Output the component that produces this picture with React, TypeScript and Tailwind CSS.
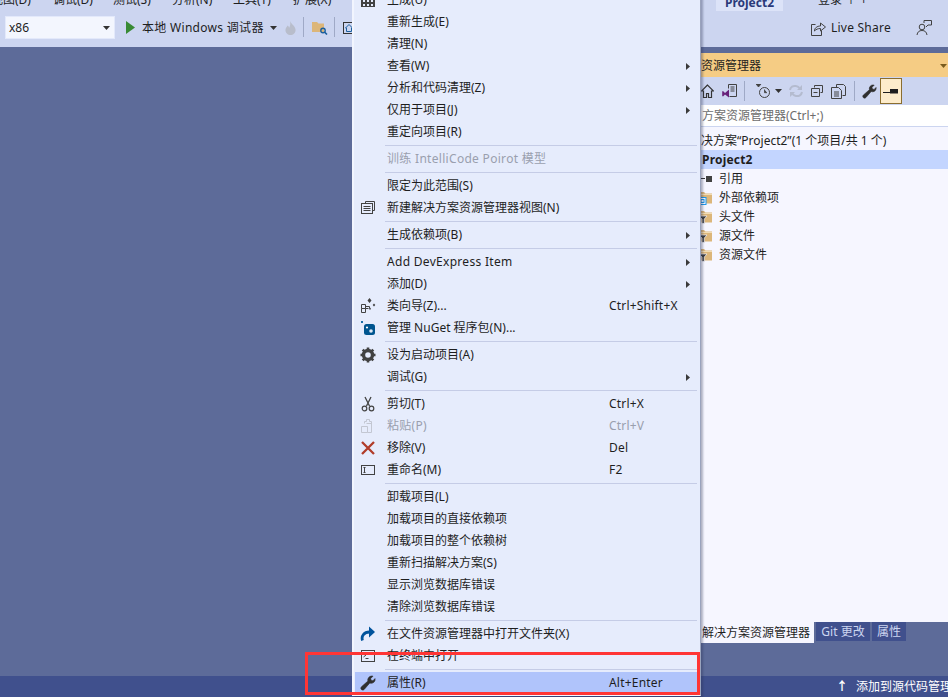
import type { ReactNode } from 'react'

const font = "font-['Noto_Sans','Noto_Sans_CJK_SC',sans-serif]"

function Caret({ className = '' }: { className?: string }) {
  return (
    <svg width="7" height="4" viewBox="0 0 7 4" className={className}>
      <path d="M0 0h7L3.5 4z" fill="currentColor" />
    </svg>
  )
}

function Wrench({ size = 16, color = '#2f2f2f' }: { size?: number; color?: string }) {
  return (
    <svg width={size} height={size} viewBox="0 0 16 16">
      <path
        d="M15 3.6c.6 2.4-1.300 4.800-3.800 4.700-.5 0-1-.1-1.400-.3L4.200 14.400c-.8.9-2.100.9-2.800.1-.8-.8-.7-2 .1-2.800L7.900 6.100C7.200 3.700 9 1 11.700 1c.5 0 1 .1 1.300.2L10.700 3.500l.4 1.800 1.800.5z"
        fill={color}
        stroke={color}
        strokeWidth="0.6"
      />
    </svg>
  )
}

function FolderIcon({ filter }: { filter?: boolean }) {
  return (
    <svg width="16" height="14" viewBox="0 0 16 14">
      <path d="M1 1h5l1.500 1.500H14v10H1z" fill="#dcb67a" />
      <path d="M1 3.500h13" stroke="#f1dcb4" />
      {filter ? (
        <path d="M1 6h8L6.300 9v4.500H4V9z" fill="#3b3b3b" stroke="#f6f6ff" strokeWidth="0.7" />
      ) : (
        <g>
          <rect x="1" y="6.500" width="7" height="7" fill="#f6f6ff" stroke="#1c97ea" />
          <rect x="3" y="8.500" width="3" height="3" fill="none" stroke="#1c97ea" />
        </g>
      )}
    </svg>
  )
}

const line = { fill: 'none', stroke: '#424242', strokeWidth: 1 }

const menuIcons: Record<string, ReactNode> = {
  build: (
    <svg width="16" height="16" viewBox="0 0 16 16">
      <rect x="1" y="1" width="14" height="14" fill="#424242" />
      <path d="M3 8h2v2H3zM7 8h2v2H7zM11 8h2v2h-2zM3 12h2v2H3zM7 12h2v2H7zM11 12h2v2h-2z" fill="#e6ecfc" />
    </svg>
  ),
  view: (
    <svg width="16" height="16" viewBox="0 0 16 16">
      <path d="M5.500 3.500V1.500h9v9h-2" {...line} />
      <rect x="1.500" y="3.500" width="11" height="10" {...line} />
      <path d="M3.500 6.500h7M3.500 8.500h7M3.500 10.500h7" {...line} />
    </svg>
  ),
  wizard: (
    <svg width="16" height="16" viewBox="0 0 16 16">
      <path d="M1.500 6.500h4v4h-4zM5.500 8.500h4v2M1.500 10.500v4h4v-4M5.500 10.500h3" {...line} />
      <path d="M9.500 0l2 2.500-2 2.500-2-2.500zM14 5.500l1.300 1.500-1.300 1.500-1.300-1.500zM10 9.500l1 1.200-1 1.200-1-1.200z" fill="#424242" />
    </svg>
  ),
  nuget: (
    <svg width="16" height="16" viewBox="0 0 16 16">
      <path d="M1 1h2v2H1z" fill="#1b6ea8" />
      <rect x="4" y="4" width="11" height="11" rx="2.500" fill="#00558f" />
      <circle cx="7" cy="7.500" r="1.100" fill="#fff" />
      <circle cx="11" cy="11" r="1.800" fill="#dfe9f5" />
    </svg>
  ),
  gear: (
    <svg width="16" height="16" viewBox="0 0 16 16">
      <circle cx="8" cy="8" r="4.500" fill="none" stroke="#424242" strokeWidth="3.400" />
      <path d="M8 .5v3M8 12.500v3M.5 8h3M12.500 8h3M2.700 2.700l2 2M11.300 11.300l2 2M13.300 2.700l-2 2M4.700 11.300l-2 2" stroke="#424242" strokeWidth="2.600" />
    </svg>
  ),
  cut: (
    <svg width="16" height="16" viewBox="0 0 16 16">
      <path d="M5 1l4.500 9M11 1L6.500 10" {...line} strokeWidth={1.300} />
      <circle cx="4.500" cy="12.500" r="2.300" {...line} strokeWidth={1.200} />
      <circle cx="11.500" cy="12.500" r="2.300" {...line} strokeWidth={1.200} />
    </svg>
  ),
  paste: (
    <svg width="16" height="16" viewBox="0 0 16 16">
      <g fill="none" stroke="#c3c7d2">
        <path d="M4.500 5.500V3.500h2v-2h3v2h2v11h-4" />
        <path d="M1.500 8.500h6v6h-6z" />
        <path d="M11.500 5.500h-5" />
      </g>
    </svg>
  ),
  remove: (
    <svg width="16" height="16" viewBox="0 0 16 16">
      <path d="M2 2l12 12M14 2L2 14" stroke="#b13c2a" strokeWidth="2.300" />
    </svg>
  ),
  rename: (
    <svg width="16" height="16" viewBox="0 0 16 16">
      <rect x="1.500" y="3.500" width="13" height="9" {...line} />
      <path d="M3.500 5.500h2M3.500 10.500h2M4.500 5.500v5" {...line} />
    </svg>
  ),
  open: (
    <svg width="16" height="16" viewBox="0 0 16 16">
      <path d="M2.500 14.500C1 10 4 6 9.500 6" fill="none" stroke="#00539c" strokeWidth="2.800" />
      <path d="M9 .5L15 6l-6 5.500z" fill="#00539c" />
    </svg>
  ),
  terminal: (
    <svg width="16" height="16" viewBox="0 0 16 16">
      <rect x="1.500" y="2.500" width="13" height="11" {...line} />
      <path d="M3.500 5l2.500 2-2.500 2M5.500 10.500h3" {...line} />
    </svg>
  ),
  wrench: <Wrench />,
}

type Row =
  | 'sep'
  | { label: string; icon?: string; key?: string; arrow?: boolean; off?: boolean; hot?: boolean }

const rows: Row[] = [
  { label: '生成(U)', icon: 'build' },
  { label: '重新生成(E)' },
  { label: '清理(N)' },
  { label: '查看(W)', arrow: true },
  { label: '分析和代码清理(Z)', arrow: true },
  { label: '仅用于项目(J)', arrow: true },
  { label: '重定向项目(R)' },
  'sep',
  { label: '训练 IntelliCode Poirot 模型', off: true },
  'sep',
  { label: '限定为此范围(S)' },
  { label: '新建解决方案资源管理器视图(N)', icon: 'view' },
  'sep',
  { label: '生成依赖项(B)', arrow: true },
  'sep',
  { label: 'Add DevExpress Item', arrow: true },
  { label: '添加(D)', arrow: true },
  { label: '类向导(Z)...', icon: 'wizard', key: 'Ctrl+Shift+X' },
  { label: '管理 NuGet 程序包(N)...', icon: 'nuget' },
  'sep',
  { label: '设为启动项目(A)', icon: 'gear' },
  { label: '调试(G)', arrow: true },
  'sep',
  { label: '剪切(T)', icon: 'cut', key: 'Ctrl+X' },
  { label: '粘贴(P)', icon: 'paste', key: 'Ctrl+V', off: true },
  { label: '移除(V)', icon: 'remove', key: 'Del' },
  { label: '重命名(M)', icon: 'rename', key: 'F2' },
  'sep',
  { label: '卸载项目(L)' },
  { label: '加载项目的直接依赖项' },
  { label: '加载项目的整个依赖树' },
  { label: '重新扫描解决方案(S)' },
  { label: '显示浏览数据库错误' },
  { label: '清除浏览数据库错误' },
  'sep',
  { label: '在文件资源管理器中打开文件夹(X)', icon: 'open' },
  { label: '在终端中打开', icon: 'terminal' },
  'sep',
  { label: '属性(R)', icon: 'wrench', key: 'Alt+Enter', hot: true },
]

function ContextMenu() {
  return (
    <div className="absolute left-[352px] top-[-11px] w-[349px] border-l-2 border-r border-b border-[#f2f5fe] border-r-[#9aa3bd] bg-[#e6ecfc] pb-[1px] pl-[1px] pr-[3px] shadow-[2px_2px_2px_rgba(40,50,80,0.35)]">
      {rows.map((r, i) =>
        r === 'sep' ? (
          <div key={i} className="flex h-[5px] items-center pl-[30px]">
            <div className="h-px w-full bg-[#c5cce6]" />
          </div>
        ) : (
          <div
            key={i}
            className={`flex h-[22px] items-center text-[12px] ${r.hot ? 'bg-[#b0c4fb]' : ''} ${r.off ? 'text-[#9a9fae]' : 'text-[#1e1e1e]'}`}
          >
            <div className="flex w-[32px] shrink-0 justify-center pr-[7px]">{r.icon ? menuIcons[r.icon] : null}</div>
            <div className={`w-[222px] whitespace-nowrap ${r.label.startsWith('Add') || r.off ? 'tracking-[0.3px]' : ''}`}>{r.label}</div>
            <div className="flex-1 whitespace-nowrap tracking-[0.2px]">{r.key}</div>
            {r.arrow ? (
              <svg width="4" height="7" viewBox="0 0 4 7" className="mr-[7px]">
                <path d="M0 0l4 3.500L0 7z" fill="#3a3a3a" />
              </svg>
            ) : null}
          </div>
        ),
      )}
    </div>
  )
}

function TopBar() {
  return (
    <div className="h-[47px] shrink-0 bg-[#ccd5f0] text-[#1e1e1e]">
      <div className="flex h-[11px] items-end overflow-hidden pb-[3px] text-[12px] leading-[16px]">
        <span className="ml-[-9px] w-[62px] whitespace-nowrap">视图(D)</span>
        <span className="w-[60px] whitespace-nowrap">调试(D)</span>
        <span className="w-[59px] whitespace-nowrap">测试(S)</span>
        <span className="w-[61px] whitespace-nowrap">分析(N)</span>
        <span className="w-[60px] whitespace-nowrap">工具(T)</span>
        <span className="w-[60px] whitespace-nowrap">扩展(X)</span>
        <div className="ml-[363px] flex h-[11px] w-[67px] items-end justify-center self-start bg-[#dce3f8] font-bold text-[#2a3a7a]">
          Project2
        </div>
        <span className="ml-[35px] whitespace-nowrap">登录 ↑ +</span>
      </div>
      <div className="flex h-[36px] items-start pt-[5px]">
        <div className="ml-[5px] flex h-[23px] w-[110px] items-center justify-between border border-[#e3e9fb] bg-[#f3f6fe] pl-[3px] pr-[4px] text-[12px]">
          x86
          <Caret className="text-[#333]" />
        </div>
        <svg width="9" height="13" viewBox="0 0 9 13" className="ml-[11px] mt-[5px]">
          <path d="M0 0l9 6.500L0 13z" fill="#388a34" />
        </svg>
        <div className="ml-[7px] mt-[3px] whitespace-nowrap text-[12px] leading-[18px] tracking-[0.3px]">本地 Windows 调试器</div>
        <Caret className="ml-[6px] mt-[10px] text-[#333]" />
        <svg width="11" height="14" viewBox="0 0 11 14" className="ml-[8px] mt-[5px]">
          <path d="M5 0c1 3 5 4.500 5.500 8.500C11 12 8 14 5.500 14S0 12 .5 8.500C.8 6.500 2 6 2.500 4.500 3.500 5 4 6 4 7c1.500-2 1.500-5 1-7z" fill="#b8bdcb" />
        </svg>
        <div className="ml-[7px] mt-[1px] h-[20px] w-px bg-[#9fa9c6]" />
        <svg width="16" height="14" viewBox="0 0 16 14" className="ml-[8px] mt-[5px]">
          <path d="M0 1h5l1.500 1.500H12V11H0z" fill="#dcb67a" />
          <circle cx="11" cy="9.500" r="2.200" fill="none" stroke="#1b5f9e" strokeWidth="1.400" />
          <path d="M12.500 11l2.500 2.500" stroke="#1b5f9e" strokeWidth="1.600" />
        </svg>
        <div className="ml-[6px] mt-[1px] h-[20px] w-px bg-[#9fa9c6]" />
        <svg width="12" height="12" viewBox="0 0 12 12" className="ml-[8px] mt-[6px] shrink-0">
          <rect x="0.500" y="0.500" width="11" height="11" fill="none" stroke="#333" />
          <path d="M6 2.500L2.500 6h1v3.500h5V6h1z" fill="none" stroke="#1b5f9e" />
        </svg>
        <div className="ml-auto flex items-center pt-[4px]">
          <svg width="15" height="15" viewBox="0 0 15 15">
            <path d="M.5 3.500h4M.5 3.500v11h10v-5" fill="none" stroke="#424242" />
            <path d="M3.500 10c0-3 2.500-5 6-5V2L14.500 6l-5 4V7.500c-2.500 0-4.500.8-6 2.500z" fill="none" stroke="#424242" />
          </svg>
          <span className="ml-[5px] text-[12px] leading-[16px] tracking-[0.25px]">Live Share</span>
          <svg width="16" height="16" viewBox="0 0 16 16" className="ml-[25px] mr-[16px]">
            <circle cx="6" cy="7" r="2.800" fill="none" stroke="#424242" />
            <path d="M1 15c.5-3 2-4.500 5-4.500s4.500 1.500 5 4.500M8 3V.5h7.500V5H12L10 7" fill="none" stroke="#424242" />
          </svg>
        </div>
      </div>
    </div>
  )
}

function SolutionExplorer() {
  return (
    <div className="flex w-[247px] shrink-0 flex-col pt-[6px] text-[#1e1e1e]">
      <div className="flex h-[24px] items-center justify-between bg-[#f5cc84] pr-[1px] pt-[1px] text-[12px]">
        <span>资源管理器</span>
        <Caret className="text-[#7a5c1e]" />
      </div>
      <div className="flex h-[28px] items-center bg-[#ccd5f0]">
        <svg width="13" height="14" viewBox="0 0 13 14">
          <path d="M6.500 1L.5 7h2v6.500h3v-4h2v4h3V7h2z" fill="none" stroke="#333" strokeWidth="1.200" />
        </svg>
        <svg width="15" height="15" viewBox="0 0 15 15" className="ml-[8px]">
          <path d="M6.500 4.500V.5h8v12h-7" fill="#ccd5f0" stroke="#424242" />
          <path d="M8.500 3h4M8.500 5h4M8.500 7h4" stroke="#424242" />
          <path d="M1 7l2 2 4-3.500v8L3 10.500l-2 2L.2 12V7.500z" fill="#68217a" />
        </svg>
        <div className="ml-[7px] h-[20px] w-px bg-[#9fa9c6]" />
        <svg width="15" height="15" viewBox="0 0 15 15" className="ml-[11px]">
          <circle cx="8.500" cy="8.500" r="5" fill="none" stroke="#424242" />
          <path d="M8.500 5.500v3.200h2.500M0 0h5L2.500 3z" stroke="#424242" fill="#424242" strokeWidth="0.800" />
        </svg>
        <Caret className="ml-[4px] text-[#333]" />
        <svg width="14" height="14" viewBox="0 0 14 14" className="ml-[7px]">
          <path d="M1 6c.5-3 3-4.500 6-4 1.500.2 2.500 1 3.500 2M13 8c-.5 3-3 4.500-6 4-1.500-.2-2.500-1-3.500-2" fill="none" stroke="#b4bbcf" strokeWidth="2" />
          <path d="M13 1v5H8zM1 13V8h5z" fill="#b4bbcf" />
        </svg>
        <svg width="12" height="12" viewBox="0 0 12 12" className="ml-[8px]">
          <path d="M3.500 2.500V.5h8v7h-2M.5 3.500h8v8h-8z" fill="none" stroke="#424242" />
          <path d="M2.500 7.500h4" stroke="#424242" />
        </svg>
        <svg width="15" height="15" viewBox="0 0 15 15" className="ml-[8px]">
          <path d="M5.500 3.500V.5h7l2 2v9h-3M.5 3.500h7l3 3v8H.5z" fill="none" stroke="#424242" />
          <path d="M3 8h5M3 10h5M3 12h5" stroke="#424242" />
        </svg>
        <div className="ml-[8px] h-[20px] w-px bg-[#9fa9c6]" />
        <div className="ml-[7px]">
          <Wrench size={15} />
        </div>
        <div className="ml-[3px] flex h-[26px] w-[22px] items-center justify-center border border-[#8a6d2f] bg-[#fdeccb]">
          <svg width="16" height="6" viewBox="0 0 16 6">
            <path d="M0 4.500h7" stroke="#1e1e1e" />
            <path d="M7 1h8v4.500H7z" fill="#1e1e1e" />
          </svg>
        </div>
      </div>
      <div className="flex h-[22px] items-center border-b border-[#ccd5f0] bg-white pl-[1px] pt-[1px] text-[12px] text-[#6d6d6d]">
        方案资源管理器(Ctrl+;)
      </div>
      <div className="flex flex-1 flex-col bg-[#f6f6ff] pt-[4px] text-[12px]">
        <div className="flex h-[19px] items-center whitespace-nowrap">决方案“Project2”(1 个项目/共 1 个)</div>
        <div className="flex h-[19px] items-center bg-[#c3d5ff] pl-[1px] font-bold tracking-[0.2px] text-[#1e1e1e]">Project2</div>
        <div className="flex h-[19px] items-center">
          <div className="flex w-[18px] items-center gap-[1px]">
            <span className="h-px w-[4px] bg-[#333]" />
            <span className="h-[6px] w-[6px] bg-[#424242]" />
          </div>
          引用
        </div>
        {['外部依赖项', '头文件', '源文件', '资源文件'].map((t, i) => (
          <div key={t} className="flex h-[19px] items-center">
            <div className="ml-[-3px] mr-[5px] w-[16px]">
              <FolderIcon filter={i > 0} />
            </div>
            {t}
          </div>
        ))}
      </div>
      <div className="flex h-[21px] shrink-0 bg-[#5d6b99] text-[12px]">
        <div className="flex w-[113px] items-center bg-[#f6f6ff] pl-[1px]">解决方案资源管理器</div>
        <div className="ml-[2px] flex h-[19px] w-[54px] items-center justify-center bg-[#40508d] text-[#ccd5f0]">Git 更改</div>
        <div className="ml-[2px] flex h-[19px] w-[34px] items-center justify-center bg-[#40508d] text-[#ccd5f0]">属性</div>
      </div>
      <div className="h-[33px] shrink-0" />
    </div>
  )
}

export default function App() {
  return (
    <div className={`relative flex h-[697px] w-[948px] flex-col overflow-hidden bg-[#5d6b99] ${font}`}>
      <TopBar />
      <div className="flex min-h-0 flex-1">
        <div className="flex-1" />
        <SolutionExplorer />
      </div>
      <div className="flex h-[21px] shrink-0 items-center whitespace-nowrap bg-[#40508d] pl-[836px] text-[12px] text-white">
        <span className="mr-[8px] font-bold">↑</span>
        添加到源代码管理
      </div>
      <ContextMenu />
      <div className="absolute left-[305px] top-[652px] h-[43px] w-[395px] border-[3px] border-[#ff3535]" />
    </div>
  )
}
